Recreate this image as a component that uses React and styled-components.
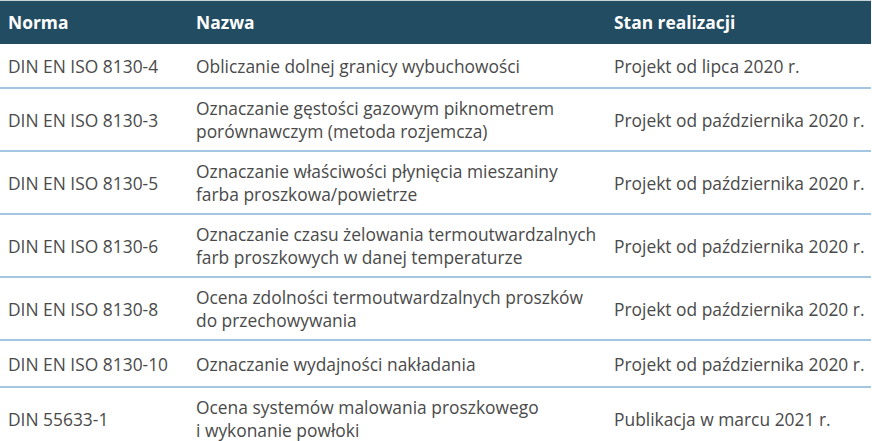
import React from 'react';
import styled, { createGlobalStyle } from 'styled-components';

const GlobalStyle = createGlobalStyle`
  html, body {
    margin: 0;
    padding: 0;
    background: #ffffff;
  }
`;

const Table = styled.table`
  width: 871px;
  border-collapse: collapse;
  table-layout: fixed;
  font-family: "Open Sans", "Noto Sans", Arial, sans-serif;
  font-size: 17.4px;
  line-height: 23px;
  color: #4a4a4a;
`;

const Col = styled.col`
  width: ${props => props.w};
`;

const HeadRow = styled.tr`
  background: #224c61;
  border-top: 1px solid #c9d2d7;
`;

const Th = styled.th`
  height: 43px;
  padding: 0 8px;
  text-align: left;
  vertical-align: middle;
  color: #ffffff;
  font-weight: 700;
  white-space: nowrap;
`;

const Row = styled.tr`
  border-bottom: 2px solid #a3c7e3;
`;

const Td = styled.td`
  height: ${props => (props.tall ? '30px' : '28px')};
  padding: 8px 6px 7px 8px;
  vertical-align: middle;
  white-space: ${props => (props.nowrap ? 'nowrap' : 'normal')};
`;

// nbsp after single-letter words keeps them with the next word (Polish typesetting)
const rows = [
  ['DIN EN ISO 8130-4', 'Obliczanie dolnej granicy wybuchowości', 'Projekt od lipca 2020 r.'],
  ['DIN EN ISO 8130-3', 'Oznaczanie gęstości gazowym piknometrem porównawczym (metoda rozjemcza)', 'Projekt od października 2020 r.'],
  ['DIN EN ISO 8130-5', 'Oznaczanie właściwości płynięcia mieszaniny farba proszkowa/powietrze', 'Projekt od października 2020 r.'],
  ['DIN EN ISO 8130-6', 'Oznaczanie czasu żelowania termoutwardzalnych farb proszkowych w\u00a0danej temperaturze', 'Projekt od października 2020 r.'],
  ['DIN EN ISO 8130-8', 'Ocena zdolności termoutwardzalnych proszków do przechowywania', 'Projekt od października 2020 r.'],
  ['DIN EN ISO 8130-10', 'Oznaczanie wydajności nakładania', 'Projekt od października 2020 r.', true],
  ['DIN 55633-1', 'Ocena systemów malowania proszkowego i\u00a0wykonanie powłoki', 'Publikacja w marcu 2021 r.'],
];

const App = () => (
  <>
    <GlobalStyle />
    <Table>
      <colgroup>
        <Col w="188px" />
        <Col w="418px" />
        <Col w="265px" />
      </colgroup>
      <thead>
        <HeadRow>
          <Th>Norma</Th>
          <Th>Nazwa</Th>
          <Th>Stan realizacji</Th>
        </HeadRow>
      </thead>
      <tbody>
        {rows.map(([norma, nazwa, stan, tall]) => (
          <Row key={norma}>
            <Td nowrap tall={tall}>{norma}</Td>
            <Td tall={tall}>{nazwa}</Td>
            <Td nowrap tall={tall}>{stan}</Td>
          </Row>
        ))}
      </tbody>
    </Table>
  </>
);

export default App;
